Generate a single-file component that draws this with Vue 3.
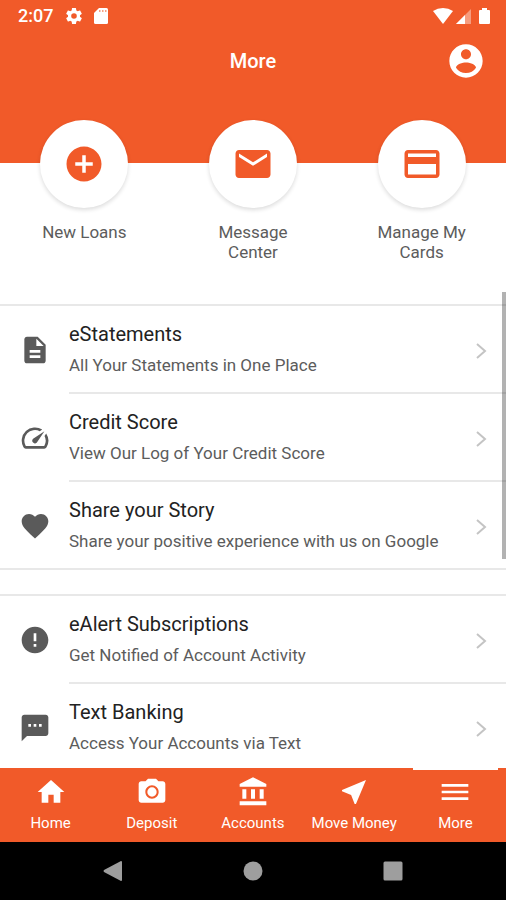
<script setup>
import { ref } from "vue";

const shortcuts = [
  { label: "New Loans", icon: "M12 2C6.48 2 2 6.48 2 12s4.48 10 10 10 10-4.48 10-10S17.52 2 12 2zm5 11h-4v4h-2v-4H7v-2h4V7h2v4h4v2z" },
  { label: "Message Center", icon: "M20 4H4c-1.1 0-1.99.9-1.99 2L2 18c0 1.1.9 2 2 2h16c1.1 0 2-.9 2-2V6c0-1.1-.9-2-2-2zm0 4l-8 5-8-5V6l8 5 8-5v2z" },
  { label: "Manage My Cards", icon: "M20 4H4c-1.11 0-1.99.89-1.99 2L2 18c0 1.11.89 2 2 2h16c1.11 0 2-.89 2-2V6c0-1.11-.89-2-2-2zm0 14H4v-6h16v6zm0-10H4V6h16v2z" },
];

const groups = [
  [
    { title: "eStatements", text: "All Your Statements in One Place", icon: "M14 2H6c-1.1 0-1.99.9-1.99 2L4 20c0 1.1.89 2 1.99 2H18c1.1 0 2-.9 2-2V8l-6-6zm2 16H8v-2h8v2zm0-4H8v-2h8v2zm-3-5V3.5L18.5 9H13z" },
    { title: "Credit Score", text: "View Our Log of Your Credit Score", icon: "M20.38 8.57l-1.23 1.85a8 8 0 0 1-.22 7.58H5.07A8 8 0 0 1 15.58 6.85l1.85-1.23A10 10 0 0 0 3.35 19a2 2 0 0 0 1.72 1h13.85a2 2 0 0 0 1.74-1 10 10 0 0 0-.27-10.44zm-9.79 6.84a2 2 0 0 0 2.83 0l5.66-8.49-8.49 5.66a2 2 0 0 0 0 2.83z" },
    { title: "Share your Story", text: "Share your positive experience with us on Google", icon: "M12 21.35l-1.45-1.32C5.4 15.36 2 12.28 2 8.5 2 5.42 4.42 3 7.5 3c1.74 0 3.41.81 4.5 2.09C13.09 3.81 14.76 3 16.5 3 19.58 3 22 5.42 22 8.5c0 3.78-3.4 6.86-8.55 11.54L12 21.35z" },
  ],
  [
    { title: "eAlert Subscriptions", text: "Get Notified of Account Activity", icon: "M12 2C6.48 2 2 6.48 2 12s4.48 10 10 10 10-4.48 10-10S17.52 2 12 2zm1 15h-2v-2h2v2zm0-4h-2V7h2v6z" },
    { title: "Text Banking", text: "Access Your Accounts via Text", icon: "M20 2H4c-1.1 0-1.99.9-1.99 2L2 22l4-4h14c1.1 0 2-.9 2-2V4c0-1.1-.9-2-2-2zM9 11H7V9h2v2zm4 0h-2V9h2v2zm4 0h-2V9h2v2z" },
  ],
];

const tabs = [
  { label: "Home", icon: "M10 20v-6h4v6h5v-8h3L12 3 2 12h3v8z" },
  { label: "Deposit", icon: "M9 2L7.17 4H4c-1.1 0-2 .9-2 2v12c0 1.1.9 2 2 2h16c1.1 0 2-.9 2-2V6c0-1.1-.9-2-2-2h-3.17L15 2H9zm3 15c-2.76 0-5-2.24-5-5s2.24-5 5-5 5 2.24 5 5-2.24 5-5 5zM12 8.5a3.5 3.5 0 1 0 0 7 3.5 3.5 0 0 0 0-7z" },
  { label: "Accounts", icon: "M4 10v7h3v-7H4zm6.5 0v7h3v-7h-3zM2 22h20v-3H2v3zm15-12v7h3v-7h-3zM12 1L2 6v2h20V6L12 1z" },
  { label: "Move Money", icon: "M21 3L3 10.53v.98l6.84 2.65L12.48 21h.98L21 3z" },
  { label: "More", icon: "M2 18h20v-2H2v2zm0-5h20v-2H2v2zm0-7v2h20V6H2z" },
];
const active = ref("More");
</script>

<template>
  <div class="app">
    <header class="top">
      <div class="status">
        <span class="time">2:07</span>
        <svg class="gear" viewBox="2 2 20 20"><path fill-rule="evenodd" d="M19.43 12.98c.04-.32.07-.64.07-.98s-.03-.66-.07-.98l2.11-1.65c.19-.15.24-.42.12-.64l-2-3.46c-.12-.22-.39-.3-.61-.22l-2.49 1c-.52-.4-1.08-.73-1.69-.98l-.38-2.65A.49.49 0 0 0 14 2h-4c-.25 0-.46.18-.49.42l-.38 2.65c-.61.25-1.17.59-1.69.98l-2.49-1c-.23-.09-.49 0-.61.22l-2 3.46c-.13.22-.07.49.12.64l2.11 1.65c-.04.32-.07.65-.07.98s.03.66.07.98l-2.11 1.65c-.19.15-.24.42-.12.64l2 3.46c.12.22.39.3.61.22l2.49-1c.52.4 1.08.73 1.69.98l.38 2.65c.03.24.24.42.49.42h4c.25 0 .46-.18.49-.42l.38-2.65c.61-.25 1.17-.59 1.69-.98l2.49 1c.23.09.49 0 .61-.22l2-3.46c.12-.22.07-.49-.12-.64l-2.11-1.65zM12 15.5a3.5 3.5 0 1 1 0-7 3.5 3.5 0 0 1 0 7z" /></svg>
        <svg class="sd" viewBox="0 0 14 16"><path d="M5 0h7.5Q14 0 14 1.5v13q0 1.5-1.5 1.5h-11Q0 16 0 14.5V5z" /><path class="slots" d="M5 2h1.5v2H5zM8 2h1.5v2H8zM11 2h1.5v2H11z" /></svg>
        <span class="spacer"></span>
        <svg class="wifi" viewBox="0 0 20 16"><path d="M10 16L0 3Q4.500 0 10 0t10 3z" /></svg>
        <svg class="signal" viewBox="0 0 15 15"><path opacity=".4" d="M15 0v15H0z" /><path d="M9 6v9H0z" /></svg>
        <svg class="battery" viewBox="0 0 11 16"><path d="M3 0h5v2h2q1 0 1 1v12q0 1-1 1H1q-1 0-1-1V3q0-1 1-1h2z" /></svg>
      </div>
      <div class="bar">
        <h1>More</h1>
        <button class="profile" aria-label="Profile">
          <svg viewBox="0 0 24 24"><path d="M12 2C6.48 2 2 6.48 2 12s4.48 10 10 10 10-4.48 10-10S17.52 2 12 2zm0 3c1.66 0 3 1.34 3 3s-1.34 3-3 3-3-1.34-3-3 1.34-3 3-3zm0 14.2c-2.5 0-4.71-1.28-6-3.22.03-1.99 4-3.08 6-3.08 1.99 0 5.97 1.09 6 3.08-1.29 1.94-3.5 3.22-6 3.22z" /></svg>
        </button>
      </div>
    </header>

    <div class="shortcuts">
      <button v-for="s in shortcuts" :key="s.label" class="shortcut">
        <span class="circle"><svg viewBox="0 0 24 24"><path :d="s.icon" /></svg></span>
        <span class="caption">{{ s.label }}</span>
      </button>
    </div>

    <div class="content">
      <main class="scroll">
        <section v-for="(group, i) in groups" :key="i" class="group">
          <a v-for="item in group" :key="item.title" class="row" href="#">
            <svg class="row-icon" viewBox="0 0 24 24"><path :d="item.icon" /></svg>
            <span class="row-body">
              <span class="row-text">
                <span class="title">{{ item.title }}</span>
                <span class="sub">{{ item.text }}</span>
              </span>
              <svg class="chevron" viewBox="0 0 12 18"><path d="M2 2l8 7-8 7" /></svg>
            </span>
          </a>
        </section>
      </main>
      <div class="thumb"></div>
    </div>

    <nav class="tabs">
      <a v-for="t in tabs" :key="t.label" href="#" class="tab" :class="{ active: active === t.label }" @click.prevent="active = t.label">
        <svg viewBox="0 0 24 24"><path :d="t.icon" /></svg>
        <span>{{ t.label }}</span>
      </a>
    </nav>

    <div class="system">
      <button aria-label="Back"><svg viewBox="0 0 20 20"><path d="M18 0q1 0 1 1v18q0 1-1 1L1 11q-1-1 0-2z" /></svg></button>
      <button aria-label="Home screen"><svg viewBox="0 0 20 20"><circle cx="10" cy="10" r="9.5" /></svg></button>
      <button aria-label="Recent apps"><svg viewBox="0 0 20 20"><rect x="0.5" y="0.5" width="19" height="19" rx="1.5" /></svg></button>
    </div>
  </div>
</template>

<style>
body { margin: 0; background: #fff; }
</style>

<style scoped>
* { box-sizing: border-box; }
.app { height: 100vh; display: flex; flex-direction: column; overflow: hidden; font-family: Roboto, "Liberation Sans", sans-serif; color: #222; }
svg { display: block; flex: none; fill: currentColor; }
button { border: 0; padding: 0; background: none; font: inherit; color: inherit; cursor: pointer; }
a { color: inherit; text-decoration: none; }

.top { flex: none; background: #f15a29; color: #fff; padding-bottom: 73px; }
.status { display: flex; align-items: center; height: 32px; padding: 0 16px 0 18px; }
.time { font-size: 18px; font-weight: 500; line-height: 20px; }
.gear { width: 16px; height: 16px; margin-left: 13px; }
.sd { width: 14px; height: 16px; margin-left: 12px; }
.slots { fill: #f7a184; }
.spacer { flex: 1; }
.wifi { width: 20px; height: 16px; }
.signal { width: 15px; height: 15px; margin-left: 3px; }
.battery { width: 11px; height: 16px; margin-left: 8px; }
.bar { display: grid; grid-template-columns: 40px 1fr 40px; align-items: center; height: 58px; padding: 0 20px; }
h1 { grid-column: 2; margin: 0; text-align: center; font-size: 20px; line-height: 24px; font-weight: 500; }
.profile svg { width: 40px; height: 40px; }

.shortcuts { flex: none; display: grid; grid-template-columns: repeat(3, 1fr); height: 172px; margin-top: -43px; }
.shortcut { display: flex; flex-direction: column; align-items: center; gap: 14px; }
.circle { display: flex; align-items: center; justify-content: center; width: 88px; height: 88px; border-radius: 50%; background: #fff; color: #f15a29; box-shadow: 0 2px 4px rgba(0,0,0,.14); }
.circle svg { width: 42px; height: 42px; }
.caption { max-width: 110px; font-size: 17px; line-height: 20px; color: #5c5c5c; }

.content { position: relative; flex: 1; min-height: 0; }
.scroll { height: 100%; padding-top: 12px; overflow-y: auto; scrollbar-width: none; }
.group { border-top: 2px solid #e8e8e8; margin-bottom: 24px; }
.row { display: flex; align-items: center; height: 88px; padding-left: 19px; }
.row-icon { width: 32px; height: 32px; margin-right: 18px; color: #5a5a5a; }
.row-body { flex: 1; display: flex; align-items: center; justify-content: space-between; height: 88px; padding: 3px 19px 0 0; border-bottom: 2px solid #e8e8e8; }
/* the closing line of a group runs the full width */
.row:last-child { box-shadow: inset 0 -2px #e8e8e8; }
.row:last-child .row-body { border-bottom-color: transparent; }
.row-text { padding-bottom: 3px; }
.title, .sub { display: block; }
.title { font-size: 20px; line-height: 32px; }
.sub { font-size: 17px; line-height: 30px; color: #5c5c5c; }
.chevron { width: 12px; height: 18px; fill: none; stroke: #c4c4c4; stroke-width: 2; }
.thumb { position: absolute; top: 0; right: 0; width: 4px; height: 56%; background: rgba(0,0,0,.3); }

.tabs { flex: none; display: grid; grid-template-columns: repeat(5, 1fr); height: 74px; background: #f15a29; color: #fff; }
.tab { display: flex; flex-direction: column; align-items: center; margin: 0 8px; padding-top: 6px; border-top: 2px solid transparent; font-size: 15px; line-height: 20px; white-space: nowrap; }
.tab.active { border-top-color: #fff; }
.tab svg { width: 32px; height: 32px; margin-bottom: 5px; }
.system { flex: none; display: flex; align-items: center; justify-content: center; gap: 120px; height: 58px; background: #000; color: #9e9e9e; }
.system svg { width: 20px; height: 20px; }
</style>
